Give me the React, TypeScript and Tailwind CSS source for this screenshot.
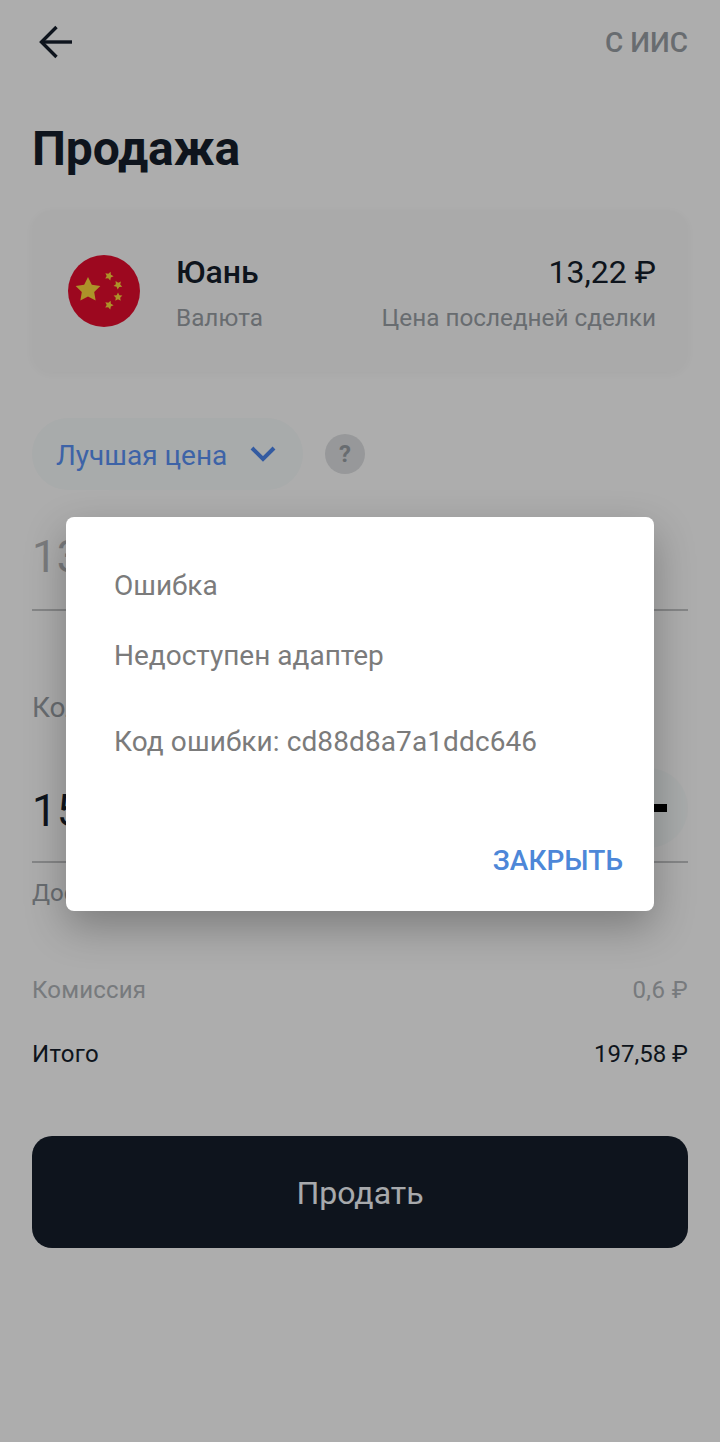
const FONT = "font-['Roboto','Noto_Sans',sans-serif]"

function FlagCN() {
  const star = 'M0 -1 L0.294 -0.405 L0.951 -0.309 L0.476 0.155 L0.588 0.809 L0 0.5 L-0.588 0.809 L-0.476 0.155 L-0.951 -0.309 L-0.294 -0.405 Z'
  return (
    <svg width="72" height="72" viewBox="0 0 72 72" className="shrink-0">
      <circle cx="36" cy="36" r="36" fill="#e60d2e" />
      <path d={star} fill="#ffd83d" transform="translate(20 35) scale(13)" />
      <path d={star} fill="#ffd83d" transform="translate(41 21) rotate(20) scale(4.6)" />
      <path d={star} fill="#ffd83d" transform="translate(50 30) rotate(40) scale(4.6)" />
      <path d={star} fill="#ffd83d" transform="translate(50 42) rotate(0) scale(4.6)" />
      <path d={star} fill="#ffd83d" transform="translate(41 50) rotate(20) scale(4.6)" />
    </svg>
  )
}

export default function App() {
  return (
    <div className={`${FONT} relative h-[1442px] w-[720px] overflow-hidden bg-white text-[#151e2b]`}>
      <div className="flex flex-col px-8">
        <header className="flex h-[84px] items-center justify-between">
          <svg width="36" height="36" viewBox="0 0 36 36" fill="none" stroke="#151e2b" strokeWidth="3.4" className="ml-[6px]">
            <path d="M34 18H4" />
            <path d="M18.500 3L3.500 18L18.500 33" />
          </svg>
          <span className="mt-[2px] text-[28px] font-medium leading-none text-[#9aa0a6]">С ИИС</span>
        </header>

        <h1 className="mt-[37px] text-[48px] font-bold leading-[56px] tracking-[-0.15px]">Продажа</h1>

        <section className="mt-[33px] flex h-[162px] items-center rounded-[20px] bg-[#fbfbfb] pl-9 pr-8 shadow-[0_2px_8px_rgba(0,0,0,0.03)]">
          <FlagCN />
          <div className="ml-[36px] mt-[8px] flex flex-col gap-[14px]">
            <span className="text-[32px] font-medium leading-[32px]">Юань</span>
            <span className="text-[24.3px] leading-[32px] text-[#9aa0a6]">Валюта</span>
          </div>
          <div className="ml-auto mt-[8px] flex flex-col items-end gap-[14px]">
            <span className="text-[32px] leading-[32px]">13,22 ₽</span>
            <span className="text-[24.3px] leading-[32px] text-[#9aa0a6]">Цена последней сделки</span>
          </div>
        </section>

        <div className="mt-[46px] flex items-center gap-[22px]">
          <div className="flex h-[72px] w-[271px] items-center rounded-full bg-[#f8fcfc] pl-6">
            <span className="mt-[4px] text-[28px] leading-none text-[#5b92f7]">Лучшая цена</span>
            <svg width="26" height="16" viewBox="0 0 26 16" fill="none" stroke="#4c86ee" strokeWidth="4" className="ml-[23px]">
              <path d="M2 2L13 13L24 2" />
            </svg>
          </div>
          <div className="flex h-10 w-10 items-center justify-center rounded-full bg-[#dfe1e3] text-[24px] font-bold leading-none text-[#9aa0a6]">?</div>
        </div>

        <div className="mt-[40px] h-[81px] border-b-2 border-[#c4c6c8] text-[44px] leading-[54px] text-[#b4b6b9]">13,22</div>

        <div className="mt-[80px] text-[28px] leading-[34px] text-[#9aa0a6]">Количество</div>

        <div className="relative mt-[20px] h-[118px] border-b-2 border-[#c4c6c8] pt-[38px] text-[44px] leading-[56px]">
          15
          <div className="absolute right-0 top-[23px] flex h-[80px] w-[80px] items-center justify-end rounded-full bg-[#f8fcfc] pr-[21px]">
            <span className="h-[8px] w-[16px] bg-black" />
          </div>
        </div>

        <div className="mt-[14px] text-[24px] leading-[32px] text-[#9aa0a6]">Доступно</div>

        <div className="mt-[65px] flex items-center justify-between text-[24px] leading-[32px] text-[#b0b4b8]">
          <span className="tracking-[0.2px]">Комиссия</span>
          <span className="tracking-[0.4px]">0,6 ₽</span>
        </div>
        <div className="mt-[32px] flex items-center justify-between text-[24px] leading-[32px]">
          <span className="tracking-[0.3px]">Итого</span>
          <span>197,58 ₽</span>
        </div>

        <button className="mt-[66px] flex h-[112px] items-center justify-center rounded-[20px] bg-[#151e2b] pt-[2px] text-[32px] text-[#f6fafe]">
          Продать
        </button>
      </div>

      {/* затемнение и диалог ошибки */}
      <div className="absolute inset-0 flex items-start justify-center bg-black/[0.32] pt-[517px]">
        <div className="flex h-[394px] w-[588px] flex-col rounded-[8px] bg-white pl-[48px] pr-[31px] text-[28px] leading-[34px] text-[#7b7b7b] shadow-[0_16px_40px_rgba(0,0,0,0.28)]">
          <p className="mt-[52px]">Ошибка</p>
          <p className="mt-[36px]">Недоступен адаптер</p>
          <p className="mt-[52px] tracking-[0.1px]">Код ошибки: cd88d8a7a1ddc646</p>
          <button className="ml-auto mt-[85px] text-[28px] font-medium leading-[34px] text-[#4d87d8]">ЗАКРЫТЬ</button>
        </div>
      </div>
    </div>
  )
}
